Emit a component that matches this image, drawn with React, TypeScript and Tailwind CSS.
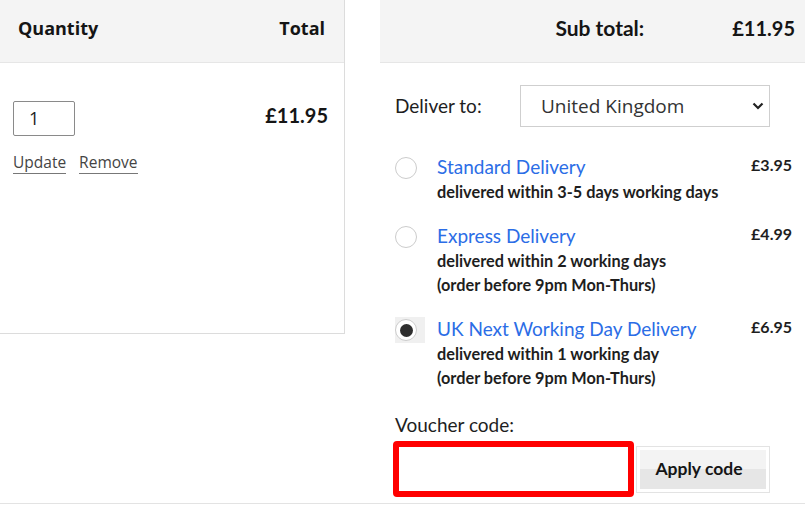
import React from "react";

const lato = { fontFamily: "Lato, 'Open Sans', sans-serif" } as const;

function Radio({ checked }: { checked?: boolean }) {
  return (
    <div className={`w-[30px] h-[26px] flex items-center ${checked ? "bg-[#f0f0f0]" : ""}`}>
      <div className="w-[22px] h-[22px] rounded-full border border-[#cccccc] bg-white flex items-center justify-center">
        {checked && <div className="w-[13px] h-[13px] rounded-full bg-[#2e2e2e]" />}
      </div>
    </div>
  );
}

function Option({
  title,
  price,
  lines,
  checked,
}: {
  title: string;
  price: string;
  lines: string[];
  checked?: boolean;
}) {
  return (
    <div className="flex">
      <div className="w-[42px] shrink-0 h-[24px] flex items-center mt-[1px]">
        <Radio checked={checked} />
      </div>
      <div className="flex-1">
        <div className="text-[19px] leading-[24px] text-[#2b6de6]">{title}</div>
        <div className="pt-[1px]">
          {lines.map((l) => (
            <div key={l} className="text-[16.3px] leading-[24px] font-bold text-[#1e1e1e]">
              {l}
            </div>
          ))}
        </div>
      </div>
      <div className="text-[16px] leading-[20px] font-bold text-[#1e1e1e]">{price}</div>
    </div>
  );
}

export default function App() {
  return (
    <div className="w-[805px] h-[504px] border-b border-[#e3e3e3] bg-white flex overflow-hidden text-[#1e1e1e]">
      {/* Left panel */}
      <div
        className="w-[345px] h-[334px] shrink-0 border-r border-b border-[#dcdcdc] flex flex-col"
        style={{ fontFamily: "'Open Sans', sans-serif" }}
      >
        <div className="h-[63px] bg-[#f4f4f4] border-b border-[#e6e6e6] flex items-start justify-between pl-[18px] pr-[19px] pt-[16px]">
          <span className="text-[18px] leading-[24px] font-bold text-[#151515]">Quantity</span>
          <span className="text-[18px] leading-[24px] font-bold text-[#151515]">Total</span>
        </div>
        <div className="flex justify-between pl-[13px] pr-[16px] pt-[38px]">
          <div>
            <div className="w-[62px] h-[35px] border border-[#8a8a8a] rounded-[2px] flex items-center pl-[15px] text-[18px] text-[#222]">
              1
            </div>
            <div className="flex gap-[13px] mt-[15px] text-[15.5px] text-[#444]">
              <span className="inline-block leading-[22px] border-b border-[#777]">Update</span>
              <span className="inline-block leading-[22px] border-b border-[#777]">Remove</span>
            </div>
          </div>
          <div className="text-[20px] leading-[24px] font-bold mt-[2px] text-[#151515]" style={lato}>
            £11.95
          </div>
        </div>
      </div>

      {/* Right panel */}
      <div className="ml-[35px] flex-1 flex flex-col" style={lato}>
        <div className="h-[63px] shrink-0 bg-[#f4f4f4] border-b border-[#e6e6e6] flex items-start justify-end pr-[10px] pt-[16px] gap-[88px]">
          <span className="text-[21px] leading-[24px] font-bold text-[#151515]">Sub total:</span>
          <span className="text-[20px] leading-[24px] font-bold text-[#151515]">£11.95</span>
        </div>
        <div className="pl-[15px] pr-[13px]">
          <div className="flex items-center mt-[22px]">
            <div className="w-[125px] text-[19px] text-[#1e1e1e]">Deliver to:</div>
            <div className="w-[250px] h-[42px] border border-[#cfcfcf] flex items-center justify-between pl-[20px] pr-[5px]">
              <span className="text-[19px] text-[#333]" style={{ fontFamily: "'Open Sans', sans-serif" }}>
                United Kingdom
              </span>
              <svg width="12" height="8" viewBox="0 0 12 8" fill="none">
                <path d="M1.5 1.5 L6 6 L10.5 1.5" stroke="#222" strokeWidth="2.2" />
              </svg>
            </div>
          </div>

          <div className="mt-[28px] flex flex-col gap-[20px]">
            <Option title="Standard Delivery" price="£3.95" lines={["delivered within 3-5 days working days"]} />
            <Option
              title="Express Delivery"
              price="£4.99"
              lines={["delivered within 2 working days", "(order before 9pm Mon-Thurs)"]}
            />
            <Option
              title="UK Next Working Day Delivery"
              price="£6.95"
              checked
              lines={["delivered within 1 working day", "(order before 9pm Mon-Thurs)"]}
            />
          </div>

          <div className="mt-[23px] text-[19px] leading-[24px] text-[#1e1e1e]">Voucher code:</div>
          <div className="flex items-center mt-[4px] -ml-[2px] gap-[2px]">
            <div className="w-[241px] h-[56px] border-[6px] border-[#ff0000] rounded-[4px] bg-white" />
            <div className="w-[134px] h-[47px] border border-[#e3e3e3] p-[3px] flex">
              <div className="flex-1 flex items-center justify-center pr-[8px] text-[17.5px] font-bold text-[#151515] bg-[linear-gradient(to_bottom,#f3f3f3_50%,#e6e6e6_50%)]">
                Apply code
              </div>
            </div>
          </div>
        </div>
      </div>
    </div>
  );
}
